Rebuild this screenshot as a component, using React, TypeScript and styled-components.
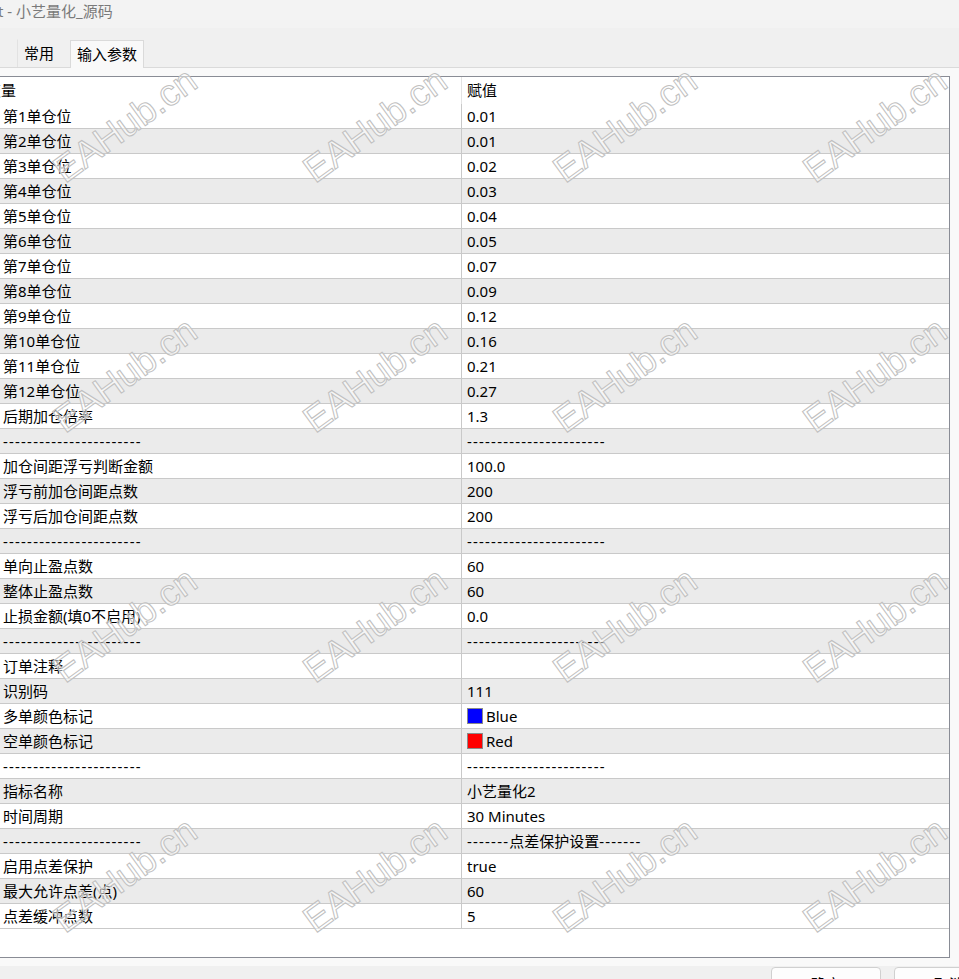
import React from "react";
import styled, { createGlobalStyle } from "styled-components";

const GlobalStyle = createGlobalStyle`
  html, body { margin: 0; padding: 0; background: #f0f0f0; overflow: hidden; }
  body { font-family: "Noto Sans", "Noto Sans CJK SC", sans-serif; }
`;

const Window = styled.div`
  position: relative;
  width: 959px;
  height: 979px;
  overflow: hidden;
  background: #f0f0f0;
  font-size: 15px;
  color: #000;
`;

const TitleBar = styled.div`
  height: 28px;
  background: #f3f3f3;
  color: #7a7a7a;
  font-family: "Noto Sans", "Noto Sans CJK SC", sans-serif;
  font-size: 15px;
  line-height: 22px;
  white-space: nowrap;
  margin-left: -2px;
`;

const TabStrip = styled.div`
  display: flex;
  align-items: flex-end;
  height: 28px;
  margin-top: 11px;
  padding-left: 17px;
`;

const Tab = styled.div<{ $active?: boolean }>`
  box-sizing: border-box;
  height: 28px;
  padding: ${(p) => (p.$active ? "0 6px 0 6px" : "0 15px 0 6px")};
  line-height: 27px;
  white-space: nowrap;
  background: ${(p) => (p.$active ? "#f9f9f9" : "transparent")};
  border: 1px solid ${(p) => (p.$active ? "#dadada" : "transparent")};
  border-left-color: ${(p) => (p.$active ? "#dadada" : "#e2e2e2")};
  border-bottom: none;
  margin-bottom: ${(p) => (p.$active ? "-1px" : "0")};
  position: relative;
`;

const Panel = styled.div`
  background: #f9f9f9;
  border-top: 1px solid #dadada;
  padding: 8px 9px 8px 0;
`;

const Table = styled.div`
  box-sizing: border-box;
  margin-left: -21px;
  width: 971px;
  height: 882px;
  background: #fff;
  border: 1px solid #898c95;
  display: flex;
  flex-direction: column;
`;

const HeaderRow = styled.div`
  display: grid;
  grid-template-columns: 482px 1fr;
  height: 27px;
  line-height: 27px;
  flex: none;
`;

const HeaderCell = styled.div<{ $first?: boolean }>`
  box-sizing: border-box;
  padding-left: ${(p) => (p.$first ? "6px" : "5px")};
  border-right: ${(p) => (p.$first ? "1px solid #e3e3e3" : "none")};
  white-space: nowrap;
`;

const Row = styled.div<{ $alt?: boolean }>`
  display: grid;
  grid-template-columns: 482px 1fr;
  height: 25px;
  box-sizing: border-box;
  border-bottom: 1px solid #c9c9c9;
  background: ${(p) => (p.$alt ? "#ebebeb" : "#fff")};
  flex: none;
`;

const NameCell = styled.div`
  box-sizing: border-box;
  padding-left: 23px;
  border-right: 1px solid #c9c9c9;
  line-height: 24px;
  white-space: nowrap;
`;

const ValueCell = styled.div`
  display: flex;
  align-items: center;
  padding-left: 5px;
  line-height: 24px;
  white-space: nowrap;
`;

const Dashes = styled.span`
  letter-spacing: 1.2px;
`;

const Swatch = styled.span<{ $color: string }>`
  display: inline-block;
  box-sizing: border-box;
  width: 16px;
  height: 16px;
  margin-right: 3px;
  border: 1px solid #8a8a8a;
  background: ${(p) => p.$color};
`;

const ButtonBar = styled.div`
  display: flex;
  gap: 13px;
  padding-left: 771px;
  padding-top: 1px;
`;

const Button = styled.div`
  flex: none;
  box-sizing: border-box;
  width: 110px;
  height: 34px;
  line-height: 33px;
  text-align: center;
  background: #fdfdfd;
  border: 1px solid #d0d0d0;
  border-radius: 4px;
`;

const Watermark = styled.svg`
  position: absolute;
  left: 0;
  top: 0;
  pointer-events: none;
`;

const DASH = "-----------------------";

type Val = string | { color: string; label: string } | { dashedTitle: string };

const rows: [string, Val][] = [
  ["第1单仓位", "0.01"],
  ["第2单仓位", "0.01"],
  ["第3单仓位", "0.02"],
  ["第4单仓位", "0.03"],
  ["第5单仓位", "0.04"],
  ["第6单仓位", "0.05"],
  ["第7单仓位", "0.07"],
  ["第8单仓位", "0.09"],
  ["第9单仓位", "0.12"],
  ["第10单仓位", "0.16"],
  ["第11单仓位", "0.21"],
  ["第12单仓位", "0.27"],
  ["后期加仓倍率", "1.3"],
  [DASH, DASH],
  ["加仓间距浮亏判断金额", "100.0"],
  ["浮亏前加仓间距点数", "200"],
  ["浮亏后加仓间距点数", "200"],
  [DASH, DASH],
  ["单向止盈点数", "60"],
  ["整体止盈点数", "60"],
  ["止损金额(填0不启用)", "0.0"],
  [DASH, DASH],
  ["订单注释", ""],
  ["识别码", "111"],
  ["多单颜色标记", { color: "#0000ff", label: "Blue" }],
  ["空单颜色标记", { color: "#ff0000", label: "Red" }],
  [DASH, DASH],
  ["指标名称", "小艺量化2"],
  ["时间周期", "30 Minutes"],
  [DASH, { dashedTitle: "点差保护设置" }],
  ["启用点差保护", "true"],
  ["最大允许点差(点)", "60"],
  ["点差缓冲点数", "5"],
];

const renderText = (t: string) => (t === DASH ? <Dashes>{t}</Dashes> : t);

const renderValue = (v: Val) => {
  if (typeof v === "string") return renderText(v);
  if ("color" in v)
    return (
      <>
        <Swatch $color={v.color} />
        {v.label}
      </>
    );
  return (
    <>
      <Dashes>-------</Dashes>
      {v.dashedTitle}
      <Dashes>-------</Dashes>
    </>
  );
};

const marks: { x: number; y: number }[] = [];
for (let j = 0; j < 4; j++) for (let i = 0; i < 4; i++) marks.push({ x: 125 + 250 * i, y: 125 + 250 * j });

export default function App() {
  return (
    <Window>
      <GlobalStyle />
      <TitleBar>t - 小艺量化_源码</TitleBar>
      <TabStrip>
        <Tab>常用</Tab>
        <Tab $active>输入参数</Tab>
      </TabStrip>
      <Panel>
        <Table>
          <HeaderRow>
            <HeaderCell $first>变量</HeaderCell>
            <HeaderCell>赋值</HeaderCell>
          </HeaderRow>
          {rows.map(([name, value], i) => (
            <Row key={i} $alt={i % 2 === 1}>
              <NameCell>{renderText(name)}</NameCell>
              <ValueCell>{renderValue(value)}</ValueCell>
            </Row>
          ))}
        </Table>
      </Panel>
      <ButtonBar>
        <Button>确定</Button>
        <Button>取消</Button>
      </ButtonBar>
      <Watermark width="959" height="979" viewBox="0 0 959 979">
        {marks.map((m, k) => (
          <text
            key={k}
            x={m.x}
            y={m.y}
            transform={`rotate(-36 ${m.x} ${m.y})`}
            textAnchor="middle"
            dominantBaseline="central"
            fontFamily="'Liberation Sans', sans-serif"
            fontSize="37"
            fill="rgba(255,255,255,0.55)"
            stroke="#c0c0c0"
            strokeWidth="1"
          >
            EAHub.cn
          </text>
        ))}
      </Watermark>
    </Window>
  );
}
